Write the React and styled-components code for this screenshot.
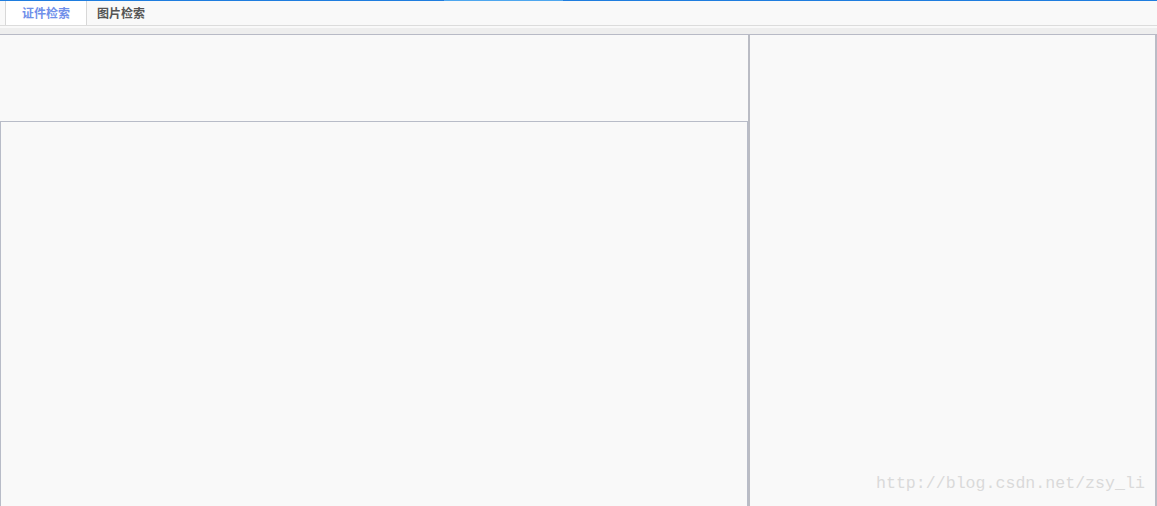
import React from 'react';
import styled, { createGlobalStyle } from 'styled-components';

const GlobalStyle = createGlobalStyle`
html, body {
  margin: 0;
  padding: 0;
  background: #f9f9f9;
  font-family: "Noto Sans CJK SC", "Liberation Sans", sans-serif;
}
#root {
  height: 100vh;
}
`;

const Page = styled.div`
display: flex;
flex-direction: column;
height: 100vh;
overflow: hidden;
position: relative;
background: #f9f9f9;
`;

const TopLine = styled.div`
height: 1px;
flex-shrink: 0;
background: linear-gradient(to right, #1f7ddf 0, #1f7ddf 444px, #4ea7ef 444px, #4ea7ef 563px, #1f7ddf 563px);
`;

const TabBar = styled.div`
display: flex;
height: 24px;
flex-shrink: 0;
padding-left: 5px;
border-bottom: 1px solid #dcdcdc;
background: #f9f9f9;
`;

const Tab = styled.div`
display: flex;
align-items: center;
height: 24px;
padding: ${p => (p.active ? '0 16px' : '0 10px')};
font-size: 12px;
font-weight: bold;
line-height: 1;
color: ${p => (p.active ? '#7090ea' : '#555555')};
background: ${p => (p.active ? '#ffffff' : 'transparent')};
border-left: ${p => (p.active ? '1px solid #d8d8d8' : 'none')};
border-right: ${p => (p.active ? '1px solid #d8d8d8' : 'none')};
`;

const Gap = styled.div`
height: 2px;
flex-shrink: 0;
`;

const Band = styled.div`
height: 6px;
flex-shrink: 0;
background: #eeeeee;
`;

const Main = styled.div`
display: flex;
flex: 1;
border-top: 1px solid #b8bac6;
`;

const LeftPanel = styled.div`
display: flex;
flex-direction: column;
width: 748px;
flex-shrink: 0;
`;

const QueryArea = styled.div`
height: 86px;
flex-shrink: 0;
`;

const ResultBox = styled.div`
flex: 1;
border-top: 1px solid #b8bcc8;
border-left: 1px solid #b8bcc8;
border-right: 1px solid #b8bcc8;
`;

const RightPanel = styled.div`
flex: 1;
border-left: 2px solid #babcc4;
border-right: 2px solid #bbbcc6;
`;

const Watermark = styled.div`
position: absolute;
left: 876px;
top: 474px;
font-family: "Liberation Mono", "DejaVu Sans Mono", monospace;
font-size: 16.6px;
color: #dadada;
white-space: nowrap;
pointer-events: none;
`;

const App = () => {
  return (
    <>
      <GlobalStyle />
      <Page>
        <TopLine />
        <TabBar>
          <Tab active>证件检索</Tab>
          <Tab>图片检索</Tab>
        </TabBar>
        <Gap />
        <Band />
        <Main>
          <LeftPanel>
            <QueryArea />
            <ResultBox />
          </LeftPanel>
          <RightPanel />
        </Main>
        <Watermark>http://blog.csdn.net/zsy_li</Watermark>
      </Page>
    </>
  );
};

export default App;
